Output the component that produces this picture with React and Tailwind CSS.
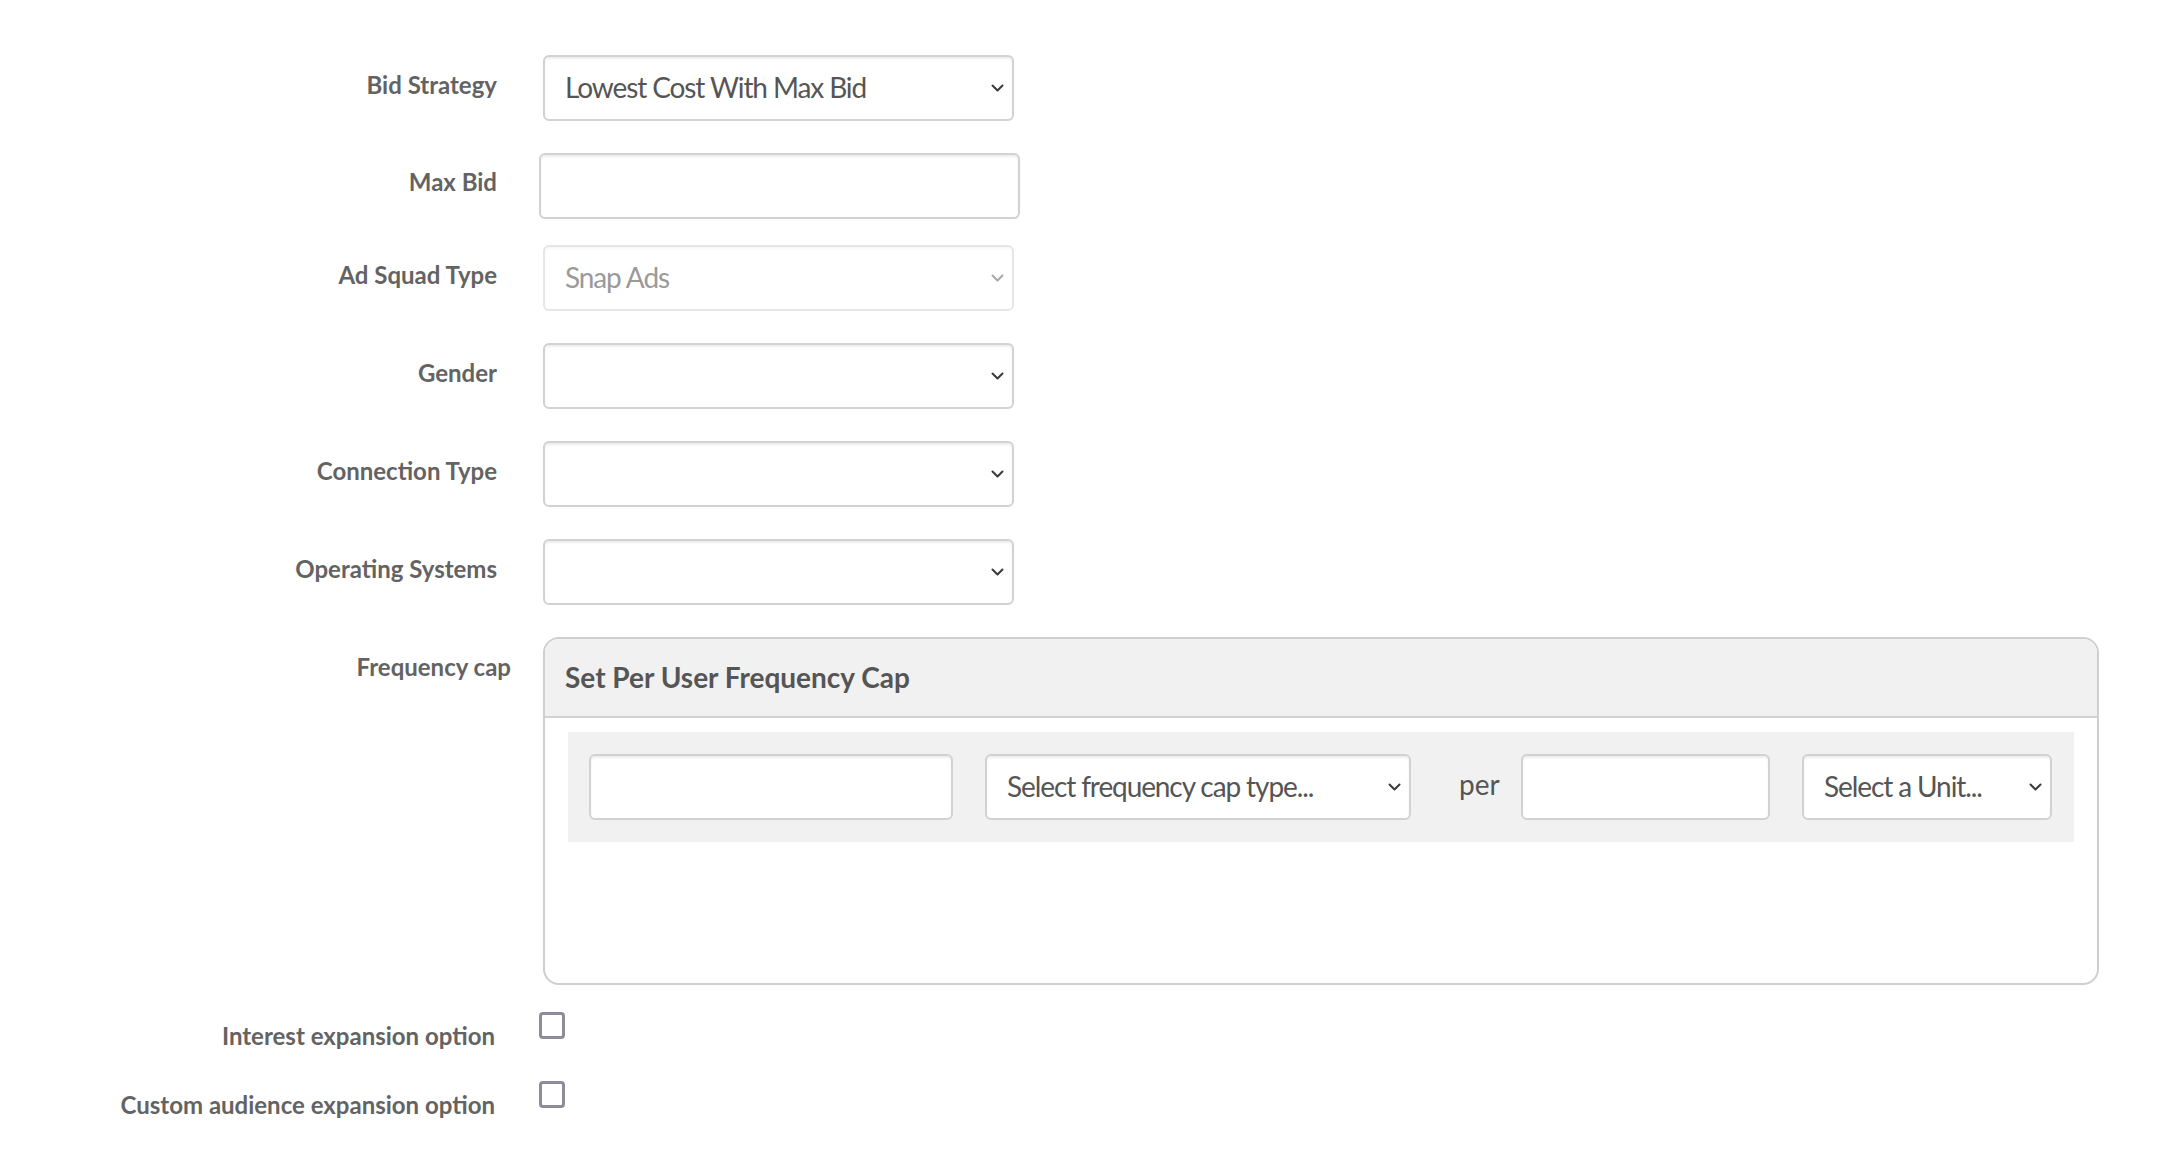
import React from "react";

function Chevron({ color = "#3a3a3a" }) {
  return (
    <svg width="13" height="8" viewBox="0 0 13 8" className="shrink-0">
      <polyline points="1.5,1.5 6.5,6.5 11.5,1.5" fill="none" stroke={color} strokeWidth="2" strokeLinecap="round" strokeLinejoin="round" />
    </svg>
  );
}

function Select({ value = "", disabled = false, className = "" }) {
  return (
    <div
      className={`h-[66px] flex items-center justify-between pl-[20px] pr-[8px] border-2 rounded-[6px] bg-white ${
        disabled
          ? "border-[#e6e6e6] text-[#9a9a9a] shadow-[inset_0_2px_2px_rgba(0,0,0,0.03)]"
          : "border-[#d2d2d2] text-[#555555] shadow-[inset_0_2px_2px_rgba(0,0,0,0.07)]"
      } ${className}`}
    >
      <span className="text-[28px] leading-[1.2] tracking-[-1.1px] whitespace-nowrap">{value}</span>
      <Chevron color={disabled ? "#a8a8a8" : "#3a3a3a"} />
    </div>
  );
}

function Input({ className = "" }) {
  return (
    <div
      className={`h-[66px] border-2 border-[#d2d2d2] rounded-[6px] bg-white shadow-[inset_0_2px_2px_rgba(0,0,0,0.07)] ${className}`}
    />
  );
}

function Label({ children, pr = "pr-[42px]", pt = "pt-[16px]" }) {
  return (
    <div className={`w-[539px] shrink-0 text-right ${pr} ${pt}`}>
      <span className="text-[24px] leading-[1.2] font-bold text-[#636363] whitespace-nowrap">{children}</span>
    </div>
  );
}

export default function App() {
  return (
    <div className="min-h-screen bg-white font-[Lato,sans-serif] pt-[55px]">
      <div className="flex mb-[32px]">
        <Label>Bid Strategy</Label>
        <Select value="Lowest Cost With Max Bid" className="ml-[4px] w-[471px]" />
      </div>
      <div className="flex mb-[26px]">
        <Label pt="pt-[15px]">Max Bid</Label>
        <Input className="w-[481px]" />
      </div>
      <div className="flex mb-[32px]">
        <Label>Ad Squad Type</Label>
        <Select value="Snap Ads" disabled className="ml-[4px] w-[471px]" />
      </div>
      <div className="flex mb-[32px]">
        <Label>Gender</Label>
        <Select className="ml-[4px] w-[471px]" />
      </div>
      <div className="flex mb-[32px]">
        <Label>Connection Type</Label>
        <Select className="ml-[4px] w-[471px]" />
      </div>
      <div className="flex mb-[32px]">
        <Label>Operating Systems</Label>
        <Select className="ml-[4px] w-[471px]" />
      </div>

      <div className="flex">
        <Label pr="pr-[28px]" pt="pt-[16px]">Frequency cap</Label>
        <div className="ml-[4px] w-[1556px] h-[348px] border-2 border-[#cfcfcf] rounded-[16px] overflow-hidden bg-white">
          <div className="h-[79px] bg-[#f1f1f1] border-b-2 border-[#d2d2d2] pl-[20px] pt-[22px]">
            <span className="text-[28px] leading-[1.2] font-bold text-[#555555]">Set Per User Frequency Cap</span>
          </div>
          <div className="mt-[14px] mx-[23px] h-[110px] bg-[#f1f1f1] flex items-center px-[21px]">
            <Input className="w-[364px]" />
            <Select value="Select frequency cap type..." className="ml-[32px] w-[426px]" />
            <span className="ml-[48px] mr-[22px] w-[40px] text-[28px] leading-[1.2] text-[#555555] -mt-[4px]">per</span>
            <Input className="w-[249px]" />
            <Select value="Select a Unit..." className="ml-[32px] w-[250px]" />
          </div>
        </div>
      </div>

      <div className="flex mt-[27px] h-[69px]">
        <Label pr="pr-[44px]" pt="pt-[10px]">Interest expansion option</Label>
        <div className="w-[26px] h-[27px] border-[3px] border-[#8f8c99] rounded-[4px] bg-white" />
      </div>
      <div className="flex h-[69px]">
        <Label pr="pr-[44px]" pt="pt-[10px]">Custom audience expansion option</Label>
        <div className="w-[26px] h-[27px] border-[3px] border-[#8f8c99] rounded-[4px] bg-white" />
      </div>
    </div>
  );
}
